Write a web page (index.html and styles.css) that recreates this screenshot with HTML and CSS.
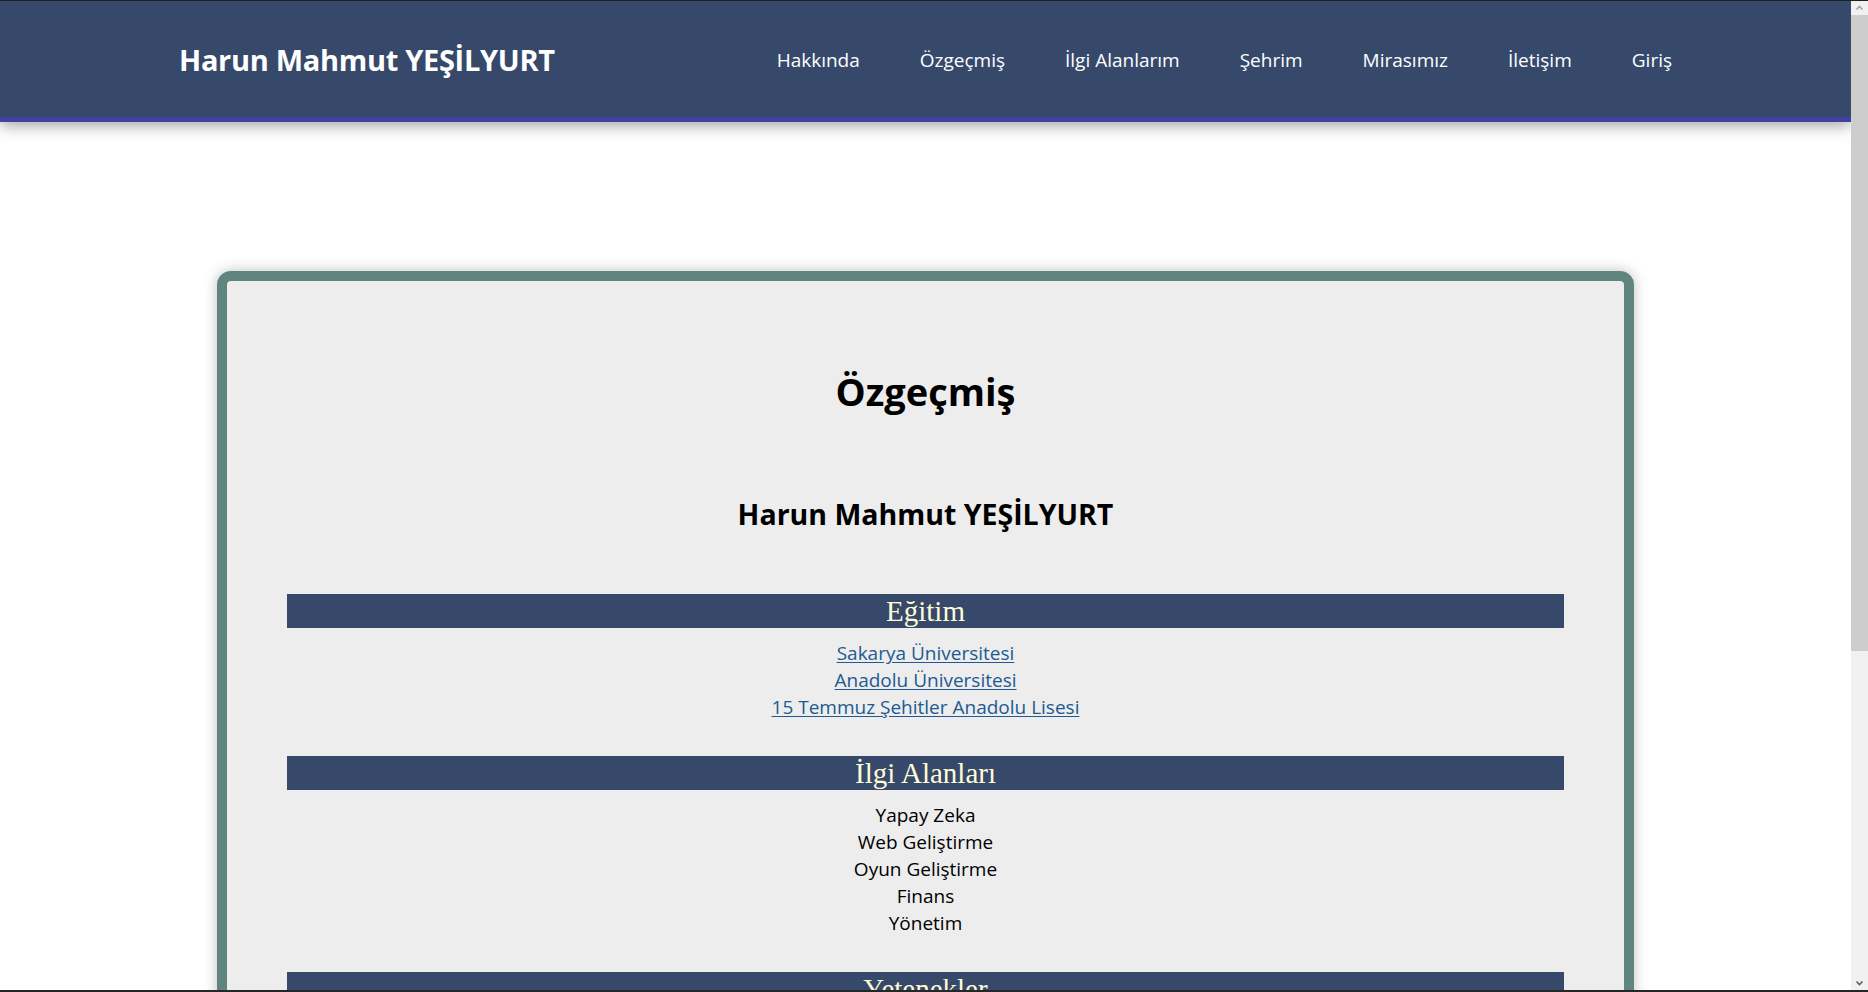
FILE: index.html
```html
<!DOCTYPE html>
<html lang="tr">
<head>
<meta charset="utf-8">
<title>Özgeçmiş - Harun Mahmut YEŞİLYURT</title>
<link rel="stylesheet" href="styles.css">
</head>
<body>
<div class="page">
  <header class="topbar">
    <div class="brand">Harun Mahmut YEŞİLYURT</div>
    <nav class="menu">
      <a href="#">Hakkında</a>
      <a href="#">Özgeçmiş</a>
      <a href="#">İlgi Alanlarım</a>
      <a href="#">Şehrim</a>
      <a href="#">Mirasımız</a>
      <a href="#">İletişim</a>
      <a href="#">Giriş</a>
    </nav>
  </header>
  <main class="card">
    <h1 class="title">Özgeçmiş</h1>
    <h2 class="name">Harun Mahmut YEŞİLYURT</h2>
    <section class="block">
      <h3 class="bar">Eğitim</h3>
      <div class="items">
        <a href="#">Sakarya Üniversitesi</a>
        <a href="#">Anadolu Üniversitesi</a>
        <a href="#">15 Temmuz Şehitler Anadolu Lisesi</a>
      </div>
    </section>
    <section class="block">
      <h3 class="bar">İlgi Alanları</h3>
      <div class="items">
        <span>Yapay Zeka</span>
        <span>Web Geliştirme</span>
        <span>Oyun Geliştirme</span>
        <span>Finans</span>
        <span>Yönetim</span>
      </div>
    </section>
    <section class="block">
      <h3 class="bar">Yetenekler</h3>
    </section>
  </main>
</div>
<div class="scrollbar">
  <svg class="arrow" width="17" height="14" viewBox="0 0 17 14"><path d="M5.5 8.5 L8.5 5.5 L11.5 8.5" fill="none" stroke="#a3a3a3" stroke-width="1.6"/></svg>
  <div class="thumb"></div>
  <div class="track"></div>
  <svg class="arrow" width="17" height="14" viewBox="0 0 17 14"><path d="M5.5 5.5 L8.5 8.5 L11.5 5.5" fill="none" stroke="#606060" stroke-width="1.6"/></svg>
</div>
</body>
</html>
```
FILE: styles.css
```css
html, body {
  margin: 0;
  padding: 0;
  overflow: hidden;
}

body {
  height: 992px;
  box-sizing: border-box;
  border-top: 1px solid #1f1f1f;
  border-bottom: 2px solid #262626;
  display: flex;
  background: #ffffff;
  font-family: "Open Sans", "Noto Sans", sans-serif;
  color: #000;
}

.page {
  flex: 1;
  min-width: 0;
  overflow: hidden;
}

.topbar {
  height: 115px;
  background: #36496b;
  border-bottom: 5px solid #4141a1;
  box-shadow: 0 4px 14px rgba(0, 0, 0, 0.35);
  display: flex;
  align-items: center;
  justify-content: space-between;
  padding: 1px 179px 0 179px;
  position: relative;
  z-index: 1;
}

.brand {
  color: #ffffff;
  font-weight: 700;
  font-size: 29px;
  letter-spacing: -0.3px;
}

.menu {
  display: flex;
  gap: 60px;
}

.menu a {
  color: #ffffff;
  text-decoration: none;
  font-size: 19px;
}

.card {
  box-sizing: border-box;
  width: 1417px;
  margin: 149px auto 0;
  background: #ededed;
  border: 10px solid #60857f;
  border-radius: 14px;
  box-shadow: 0 0 14px rgba(0, 0, 0, 0.25);
  padding: 0 60px 60px;
  text-align: center;
}

.title {
  margin: 87px 0 0;
  font-size: 38px;
  line-height: 46px;
  font-weight: 700;
}

.name {
  margin: 80px 0 0;
  font-size: 28.5px;
  line-height: 41px;
  font-weight: 700;
}

.block {
  margin-top: 59px;
}

.block + .block {
  margin-top: 35px;
}

.bar {
  margin: 0;
  background: #36496b;
  color: #fffbd6;
  font-family: "Liberation Serif", "Times New Roman", serif;
  font-weight: 400;
  font-size: 29px;
  line-height: 34px;
}

.items {
  margin-top: 12px;
  display: flex;
  flex-direction: column;
  align-items: center;
  font-size: 19px;
  line-height: 27px;
}

.items a {
  color: #215a91;
  text-decoration: underline;
  text-underline-offset: 2px;
}

.scrollbar {
  width: 17px;
  flex: none;
  background: #f1f1f1;
  display: flex;
  flex-direction: column;
}

.arrow {
  display: block;
  flex: none;
}

.thumb {
  height: 636px;
  background: #cdcdcd;
  flex: none;
}

.track {
  flex: 1;
}
```
